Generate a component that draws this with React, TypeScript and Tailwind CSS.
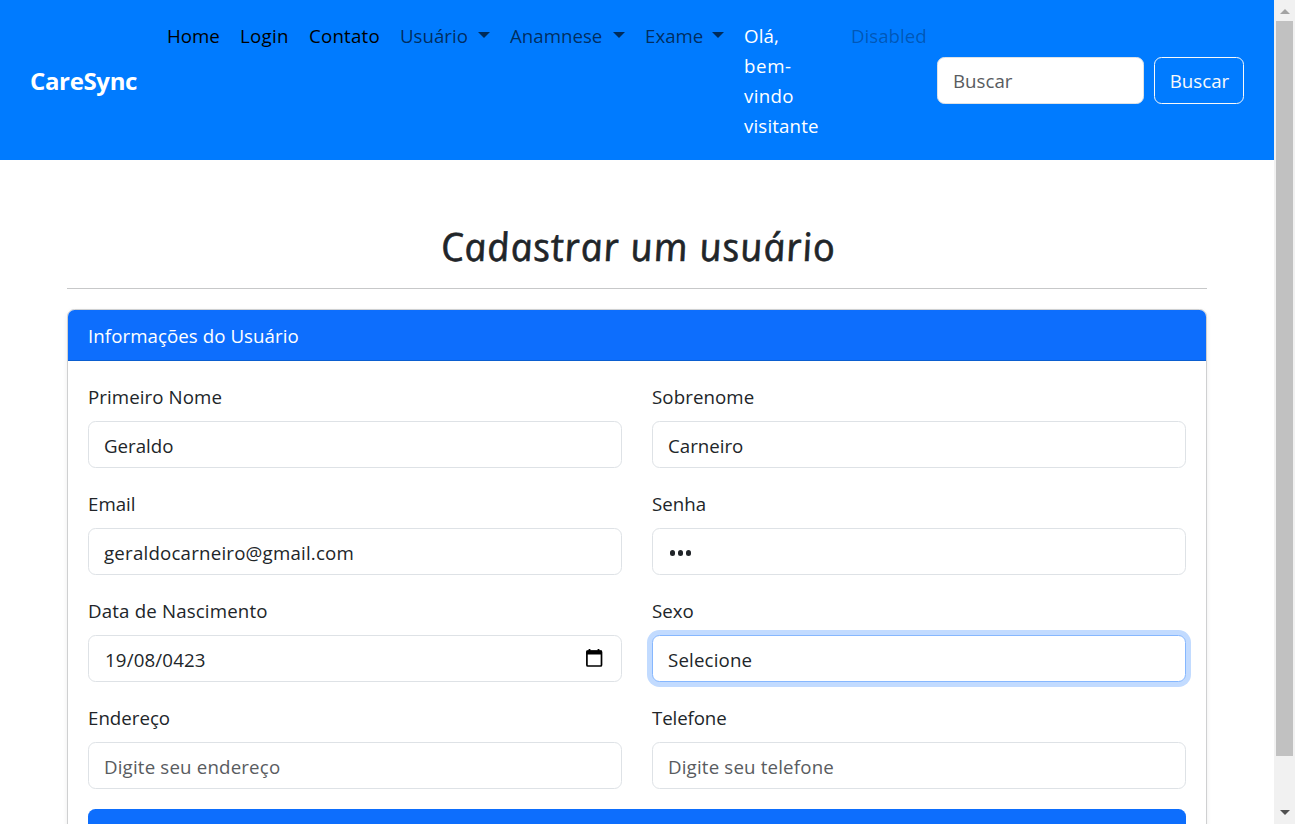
import type { ReactNode } from "react";

function NavLink({ children, className, caret }: { children: ReactNode; className: string; caret?: boolean }) {
  return (
    <li className={"flex h-[46px] shrink-0 items-center justify-between px-2.5 whitespace-nowrap " + className}>
      <a href="#">{children}</a>
      {caret && <span className="mb-0.5 size-0 border-x-6 border-t-6 border-x-transparent border-t-black/65" />}
    </li>
  );
}

function Field({ label, labelClass = "", children }: { label: string; labelClass?: string; children: ReactNode }) {
  return (
    <div>
      <div className="mb-2.5 h-[30px] leading-[31px] whitespace-nowrap">
        <span className={labelClass}>{label}</span>
      </div>
      {children}
    </div>
  );
}

const box = "flex h-[47px] items-center rounded-[7.5px] border bg-white px-[15px] whitespace-nowrap ";

export default function App() {
  return (
    <div className="flex h-[824px] w-[1295px] overflow-hidden bg-white font-['Segoe_UI','Open_Sans',sans-serif] text-[18.7px] leading-[30px] text-[#212529]">
      <div className="w-[1274px] shrink-0">
        <nav className="flex h-40 items-center bg-[#007bff] px-[30px]">
          <a href="#" className="w-[127px] shrink-0 pt-0.5 text-[24px] font-bold tracking-[-0.35px] text-white">
            CareSync
          </a>
          <ul className="flex h-40 w-[780px] shrink-0 items-start pt-[13px]">
            <NavLink className="w-[73px] text-black">Home</NavLink>
            <NavLink className="w-[69px] tracking-[0.3px] text-black">Login</NavLink>
            <NavLink className="w-[91px] tracking-[0.2px] text-black">Contato</NavLink>
            <NavLink className="w-[110px] text-black/65" caret>Usuário</NavLink>
            <NavLink className="w-[135px] text-black/65" caret>Anamnese</NavLink>
            <NavLink className="w-[99px] text-black/65" caret>Exame</NavLink>
            <li className="w-[107px] shrink-0 px-2.5 pt-2 tracking-[0.15px] text-white">
              Olá,
              <br />
              <span className="tracking-[0.6px]">bem-</span>
              <br />
              <span className="tracking-[0.3px]">vindo</span>
              <br />
              visitante
            </li>
            <NavLink className="w-[96px] text-black/30">Disabled</NavLink>
          </ul>
          <form className="flex gap-2.5">
            <div className={box + "w-[207px] border-[#dee2e6] pt-px text-[#595c5f]"}>Buscar</div>
            <button type="button" className="flex h-[47px] w-[90px] items-center justify-center rounded-[7.5px] border border-[#f8f9fa] pt-px pl-px text-[#f8f9fa]">
              Buscar
            </button>
          </form>
        </nav>

        <main className="px-[67px] pt-[60px]">
          <h2 className="flex h-[54px] items-center justify-center pb-[3px] text-[39px] leading-[54px] whitespace-nowrap">
            <span className="inline-block skew-x-[9deg] tracking-[0.75px] italic [-webkit-text-stroke:0.6px_#212529] [stroke-linejoin:round]">
              Cadastrar um usuário
            </span>
          </h2>
          <hr className="mt-[14px] border-[#c7c8c9]" />

          <section className="mt-5 h-[600px] rounded-[7.5px] border border-[#cfd0d1] bg-white shadow-[0_2px_5px_rgba(0,0,0,0.075)]">
            <header className="h-[51px] rounded-t-[6.5px] border-b border-[#0b5ed0] bg-[#0d6efd] px-5 pt-[11px] tracking-[0.06px] text-white">
              Informações do Usuário
            </header>
            <div className="px-5 pt-5">
              <div className="grid grid-cols-2 gap-x-[30px] gap-y-5">
                <Field label="Primeiro Nome" labelClass="tracking-[0.08px]">
                  <div className={box + "border-[#dee2e6] pt-[3px]"}>Geraldo</div>
                </Field>
                <Field label="Sobrenome" labelClass="tracking-[0.08px]">
                  <div className={box + "border-[#dee2e6] pt-[3px]"}>Carneiro</div>
                </Field>
                <Field label="Email">
                  <div className={box + "border-[#dee2e6] pt-[3px] tracking-[0.2px]"}>geraldocarneiro@gmail.com</div>
                </Field>
                <Field label="Senha">
                  <div className={box + "border-[#dee2e6] pt-[3px]"}>
                    <span className="flex gap-[3px] pl-[1.5px]">
                      <i className="size-[5.2px] rounded-full bg-[#212529]" />
                      <i className="size-[5.2px] rounded-full bg-[#212529]" />
                      <i className="size-[5.2px] rounded-full bg-[#212529]" />
                    </span>
                  </div>
                </Field>
                <Field label="Data de Nascimento" labelClass="tracking-[0.16px]">
                  <div className={box + "justify-between border-[#dee2e6] pt-[3px]"}>
                    <span className="pl-px tracking-[0.15px]">19/08/0423</span>
                    <svg className="mr-[3px] mb-[4px]" width="18" height="20" viewBox="0 0 18 20" fill="none">
                      <path d="M4.5 1v4M13.5 1v4" stroke="#000" strokeWidth="1.8" />
                      <rect x="1.9" y="3" width="14.6" height="15" rx="1" stroke="#000" strokeWidth="1.7" />
                      <path d="M1.5 2.5h15.4v4H1.5z" fill="#000" />
                    </svg>
                  </div>
                </Field>
                <Field label="Sexo">
                  <div className={box + "border-[#86b7fe] pt-[3px] tracking-[0.15px] shadow-[0_0_0_5px_#c2dbff]"}>Selecione</div>
                </Field>
                <Field label="Endereço">
                  <div className={box + "border-[#dee2e6] pt-[3px] tracking-[0.17px] text-[#595c5f]"}>Digite seu endereço</div>
                </Field>
                <Field label="Telefone" labelClass="tracking-[-0.12px]">
                  <div className={box + "border-[#dee2e6] pt-[3px] tracking-[0.17px] text-[#595c5f]"}>Digite seu telefone</div>
                </Field>
              </div>
              <button type="button" className="mt-5 block h-[47px] w-full rounded-[7.5px] bg-[#0d6efd]" />
            </div>
          </section>
        </main>
      </div>

      <div className="flex w-[21px] shrink-0 flex-col items-center bg-[#f1f1f1]">
        <div className="flex h-[21px] items-center justify-center">
          <span className="mt-0.5 size-0 border-x-[5px] border-b-5 border-x-transparent border-b-[#a3a3a3]" />
        </div>
        <div className="h-[735px] w-[17px] bg-[#c1c1c1]" />
        <span className="mt-[54px] size-0 border-x-[5px] border-t-5 border-x-transparent border-t-[#505050]" />
      </div>
    </div>
  );
}
